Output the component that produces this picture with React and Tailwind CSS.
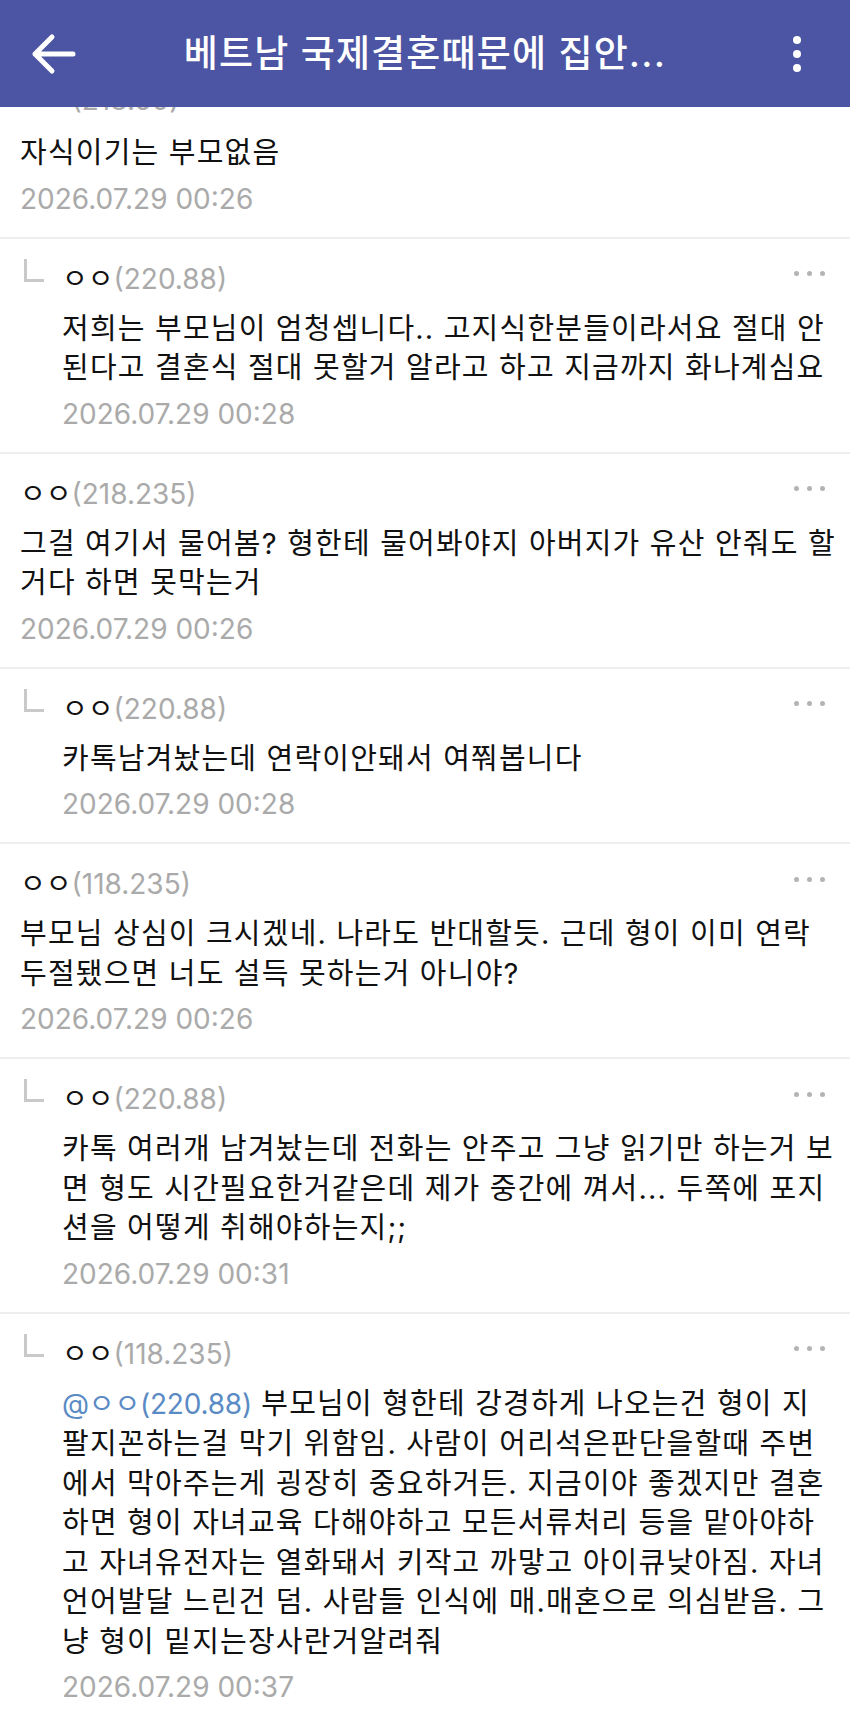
import React from "react";

const comments = [
  {
    reply: false,
    ip: "(218.50)",
    lines: ["자식이기는 부모없음"],
    date: "2026.07.29 00:26",
  },
  {
    reply: true,
    ip: "(220.88)",
    lines: [
      "저희는 부모님이 엄청셉니다.. 고지식한분들이라서요 절대 안",
      "된다고 결혼식 절대 못할거 알라고 하고 지금까지 화나계심요",
    ],
    date: "2026.07.29 00:28",
  },
  {
    reply: false,
    ip: "(218.235)",
    lines: [
      "그걸 여기서 물어봄? 형한테 물어봐야지 아버지가 유산 안줘도 할",
      "거다 하면 못막는거",
    ],
    date: "2026.07.29 00:26",
  },
  {
    reply: true,
    ip: "(220.88)",
    lines: ["카톡남겨놨는데 연락이안돼서 여쭤봅니다"],
    date: "2026.07.29 00:28",
  },
  {
    reply: false,
    ip: "(118.235)",
    lines: [
      "부모님 상심이 크시겠네. 나라도 반대할듯. 근데 형이 이미 연락",
      "두절됐으면 너도 설득 못하는거 아니야?",
    ],
    date: "2026.07.29 00:26",
  },
  {
    reply: true,
    ip: "(220.88)",
    lines: [
      "카톡 여러개 남겨놨는데 전화는 안주고 그냥 읽기만 하는거 보",
      "면 형도 시간필요한거같은데 제가 중간에 껴서... 두쪽에 포지",
      "션을 어떻게 취해야하는지;;",
    ],
    date: "2026.07.29 00:31",
  },
  {
    reply: true,
    ip: "(118.235)",
    mention: "@ㅇㅇ(220.88)",
    lines: [
      " 부모님이 형한테 강경하게 나오는건 형이 지",
      "팔지꼰하는걸 막기 위함임. 사람이 어리석은판단을할때 주변",
      "에서 막아주는게 굉장히 중요하거든. 지금이야 좋겠지만 결혼",
      "하면 형이 자녀교육 다해야하고 모든서류처리 등을 맡아야하",
      "고 자녀유전자는 열화돼서 키작고 까맣고 아이큐낮아짐. 자녀",
      "언어발달 느린건 덤. 사람들 인식에 매.매혼으로 의심받음. 그",
      "냥 형이 밑지는장사란거알려줘",
    ],
    date: "2026.07.29 00:37",
  },
];

const font = { fontFamily: '"Inter", "Noto Sans CJK KR", sans-serif' };

const Comment = ({ c, first }) => (
  <div className={first ? "" : "border-t-2 border-[#eeeeee]"}>
    <div
      className={`${first ? "pt-[17px]" : "pt-[20px]"} pb-[18px] pr-[25px] ${
        c.reply ? "pl-[62px]" : "pl-[20px]"
      }`}
    >
      {/* name row */}
      <div className="relative flex items-center h-[40px]">
        {c.reply && (
          <div className="absolute left-[-38px] top-[0px] w-[20px] h-[23px] border-l-[3px] border-b-[3px] border-[#c9c9c9]" />
        )}
        <span className="text-[28px] text-[#111]">ㅇㅇ</span>
        <span className="text-[28px] text-[#aaaaaa]">{c.ip}</span>
        <div className="ml-auto flex items-center gap-[8px] -mt-[10px]">
          <span className="w-[5px] h-[5px] rounded-full bg-[#b4b4b4]" />
          <span className="w-[5px] h-[5px] rounded-full bg-[#b4b4b4]" />
          <span className="w-[5px] h-[5px] rounded-full bg-[#b4b4b4]" />
        </div>
      </div>
      {/* body */}
      <div
        className={`${first ? "mt-[13px]" : "mt-[10px]"} text-[29px] leading-[39.5px] text-[#111] tracking-[1.2px]`}
      >
        {c.lines.map((line, i) => (
          <div key={i} className="whitespace-pre">
            {i === 0 && c.mention && (
              <span className="text-[#5b8bc4] text-[28px] tracking-[-0.2px]">{c.mention}</span>
            )}
            {line}
          </div>
        ))}
      </div>
      <div className="mt-[6px] text-[28px] leading-[40px] text-[#aaaaaa]">{c.date}</div>
    </div>
  </div>
);

export default function App() {
  return (
    <div className="w-[850px] min-h-[1716px] bg-white overflow-hidden" style={font}>
      {/* Top bar */}
      <div className="relative z-10 h-[107px] bg-[#4b55a3] flex items-center">
        <div className="w-[110px] pl-[31px] flex items-center">
          <svg width="46" height="42" viewBox="0 0 46 42" fill="none">
            <path
              d="M4 21 H42 M4 21 L21 4 M4 21 L21 38"
              stroke="white"
              strokeWidth="5"
              strokeLinecap="round"
              strokeLinejoin="round"
            />
          </svg>
        </div>
        <div className="flex-1 text-center text-white text-[37px] font-medium tracking-[1.2px] whitespace-nowrap">
          베트남 국제결혼때문에 집안...
        </div>
        <div className="w-[110px] pr-[49px] flex flex-col items-end gap-[6px]">
          <span className="w-[8px] h-[8px] rounded-full bg-white" />
          <span className="w-[8px] h-[8px] rounded-full bg-white" />
          <span className="w-[8px] h-[8px] rounded-full bg-white" />
        </div>
      </div>

      {/* Comment list */}
      <div className="-mt-[44px]">
        {comments.map((c, i) => (
          <Comment key={i} c={c} first={i === 0} />
        ))}
      </div>
    </div>
  );
}
